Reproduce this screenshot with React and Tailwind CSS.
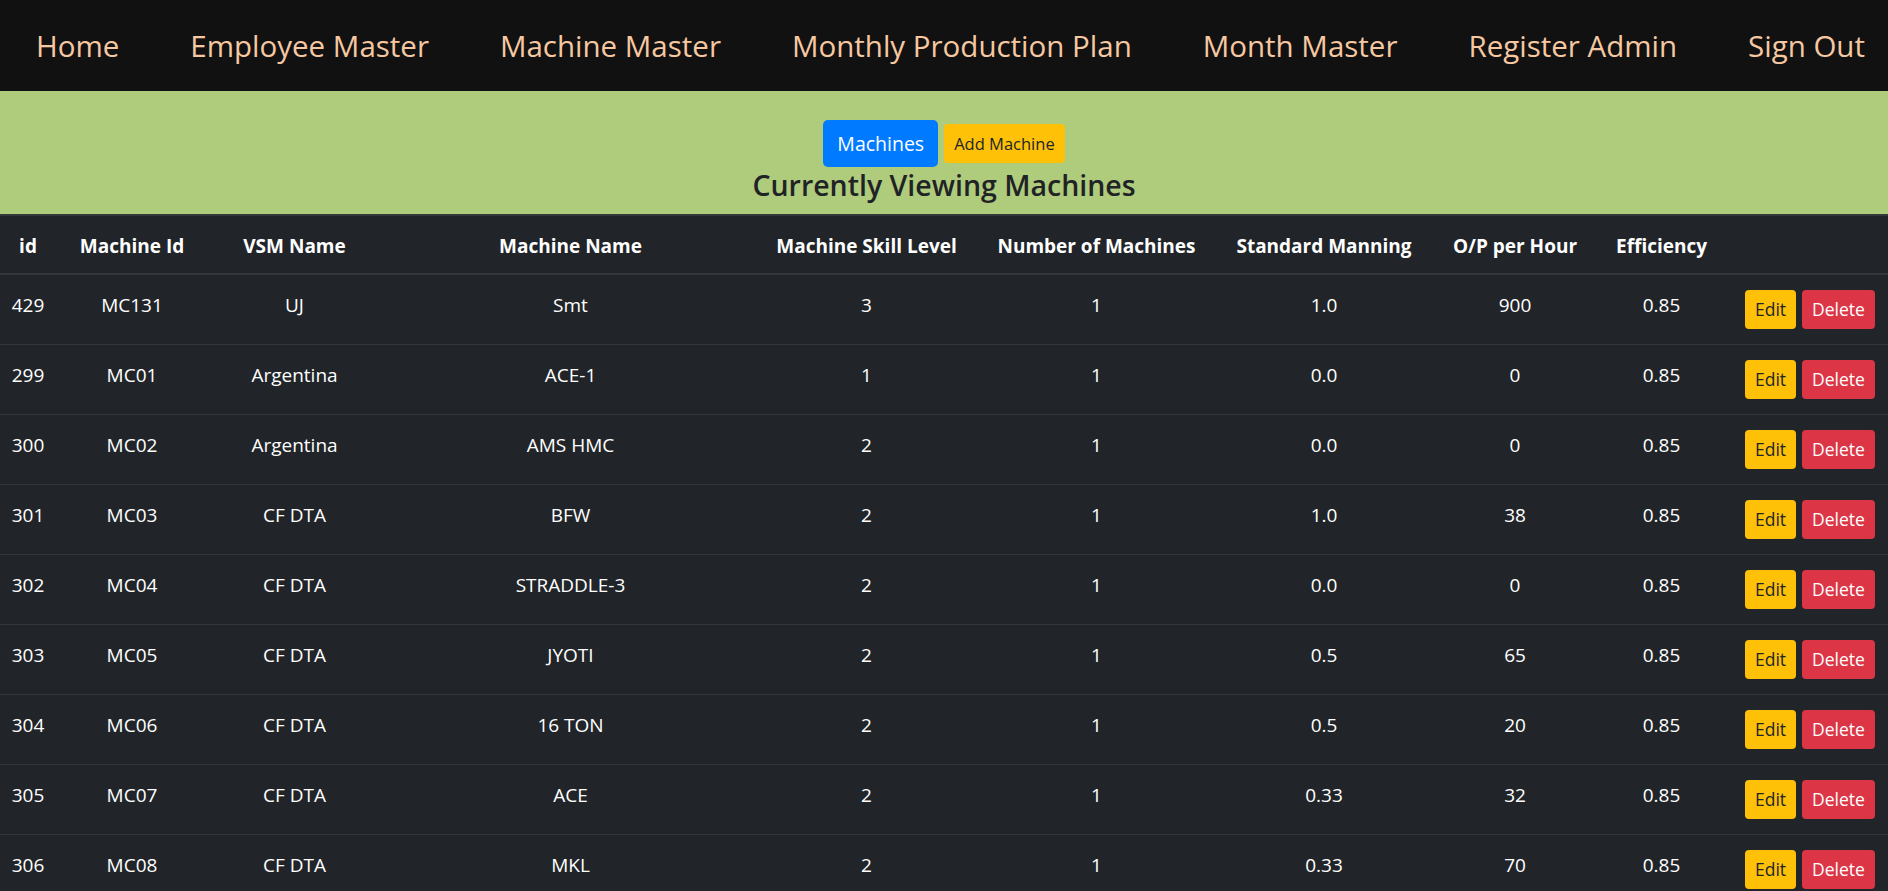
import React from "react";

const navLinks = [
  "Home",
  "Employee Master",
  "Machine Master",
  "Monthly Production Plan",
  "Month Master",
  "Register Admin",
  "Sign Out",
];

const columns = [
  { title: "id", w: "w-[56px]" },
  { title: "Machine Id", w: "w-[152px]" },
  { title: "VSM Name", w: "w-[173px]" },
  { title: "Machine Name", w: "w-[379px]" },
  { title: "Machine Skill Level", w: "w-[213px]" },
  { title: "Number of Machines", w: "w-[247px]" },
  { title: "Standard Manning", w: "w-[208px]" },
  { title: "O/P per Hour", w: "w-[174px]" },
  { title: "Efficiency", w: "w-[119px]" },
  { title: "", w: "w-[167px]" },
];

const machines = [
  [429, "MC131", "UJ", "Smt", 3, 1, "1.0", 900, "0.85"],
  [299, "MC01", "Argentina", "ACE-1", 1, 1, "0.0", 0, "0.85"],
  [300, "MC02", "Argentina", "AMS HMC", 2, 1, "0.0", 0, "0.85"],
  [301, "MC03", "CF DTA", "BFW", 2, 1, "1.0", 38, "0.85"],
  [302, "MC04", "CF DTA", "STRADDLE-3", 2, 1, "0.0", 0, "0.85"],
  [303, "MC05", "CF DTA", "JYOTI", 2, 1, "0.5", 65, "0.85"],
  [304, "MC06", "CF DTA", "16 TON", 2, 1, "0.5", 20, "0.85"],
  [305, "MC07", "CF DTA", "ACE", 2, 1, "0.33", 32, "0.85"],
  [306, "MC08", "CF DTA", "MKL", 2, 1, "0.33", 70, "0.85"],
];

function App() {
  return (
    <div className="min-h-screen bg-[#212529] font-['Open_Sans',sans-serif]">
      {/* navbar */}
      <nav className="h-[91px] bg-[#111111] flex items-center justify-between pl-[36px] pr-[23px]">
        {navLinks.map((l) => (
          <a key={l} href="#" className="text-[29.5px] text-[#f6c8a1] leading-none">
            {l}
          </a>
        ))}
      </nav>

      {/* header band */}
      <div className="bg-[#afcb7c] pt-[29px] pb-[11px] flex flex-col items-center">
        <div className="flex items-center gap-[6px]">
          <button className="h-[47px] bg-[#007bff] text-white text-[19.5px] leading-[30px] px-[14px] rounded-[5px]">
            Machines
          </button>
          <button className="h-[39px] bg-[#ffc107] text-[#212529] text-[16.5px] leading-[27px] px-[10px] rounded-[4px]">
            Add Machine
          </button>
        </div>
        <h4 className="text-[28.5px] leading-[36px] font-semibold text-[#1f2326]">
          Currently Viewing Machines
        </h4>
      </div>

      {/* table */}
      <table className="w-full table-fixed border-collapse text-white text-[19px]">
        <colgroup>
          {columns.map((c, i) => (
            <col key={i} className={c.w} />
          ))}
        </colgroup>
        <thead>
          <tr>
            {columns.map((c, i) => (
              <th
                key={i}
                className="border-t-2 border-b-2 border-[#32373c] pt-[15px] pb-[12px] leading-[30px] font-bold text-center whitespace-nowrap"
              >
                {c.title}
              </th>
            ))}
          </tr>
        </thead>
        <tbody>
          {machines.map((m) => (
            <tr key={m[0]} className="border-t border-[#32373c]">
              {m.map((v, i) => (
                <td key={i} className="align-top text-center pt-[15px] pb-[15px] leading-[30px] whitespace-nowrap">
                  {v}
                </td>
              ))}
              <td className="align-top pt-[15px] pb-[15px] pl-[24px]">
                <div className="flex gap-[6px]">
                  <button className="h-[39px] bg-[#ffc107] text-[#212529] text-[17.5px] px-[10px] rounded-[4px]">
                    Edit
                  </button>
                  <button className="h-[39px] bg-[#dc3545] text-white text-[17.5px] px-[10px] rounded-[4px]">
                    Delete
                  </button>
                </div>
              </td>
            </tr>
          ))}
        </tbody>
      </table>
    </div>
  );
}

export default App;
